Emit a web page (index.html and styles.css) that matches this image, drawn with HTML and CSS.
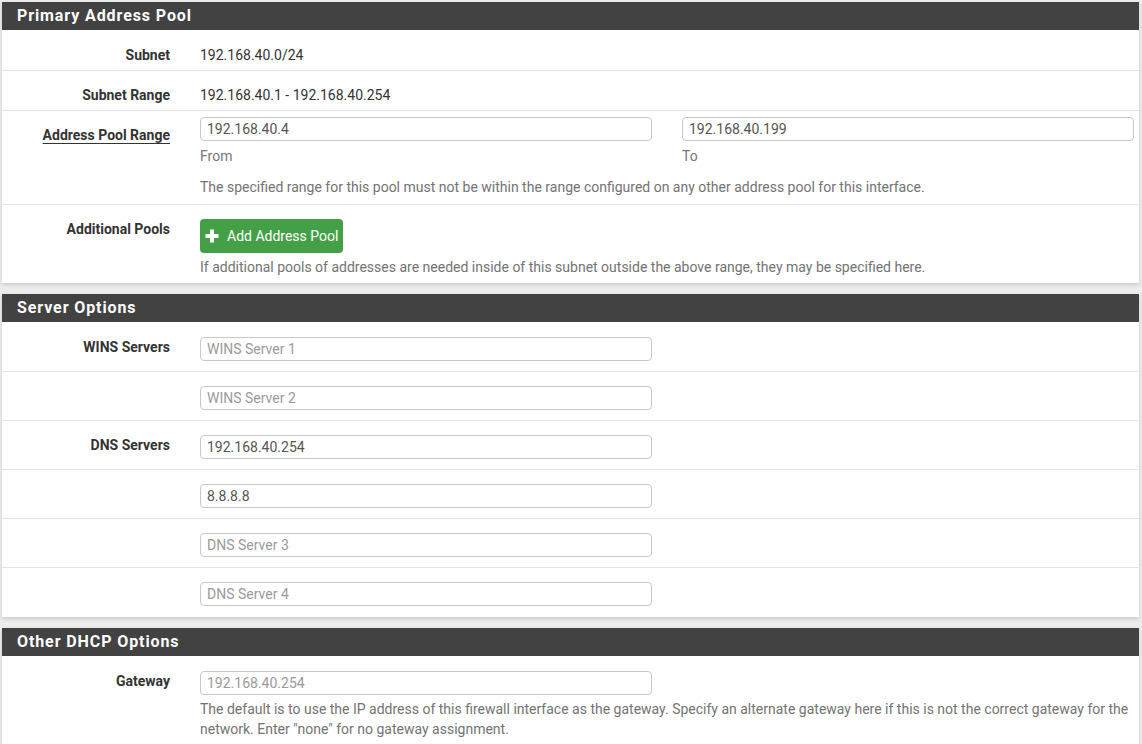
FILE: index.html
```html
<!DOCTYPE html>
<html>
<head>
<meta charset="utf-8">
<link rel="stylesheet" href="styles.css">
</head>
<body>
<div class="page">

  <section class="panel">
    <h2 class="panel-heading">Primary Address Pool</h2>
    <div class="row row-static">
      <div class="label">Subnet</div>
      <div class="field"><div class="static">192.168.40.0/24</div></div>
    </div>
    <div class="row row-static">
      <div class="label">Subnet Range</div>
      <div class="field"><div class="static">192.168.40.1 - 192.168.40.254</div></div>
    </div>
    <div class="row row-range">
      <div class="label"><span class="u">Address Pool Range</span></div>
      <div class="field">
        <div class="pair">
          <div>
            <input class="input" type="text" value="192.168.40.4">
            <div class="sub">From</div>
          </div>
          <div>
            <input class="input" type="text" value="192.168.40.199">
            <div class="sub">To</div>
          </div>
        </div>
        <div class="help help-gap">The specified range for this pool must not be within the range configured on any other address pool for this interface.</div>
      </div>
    </div>
    <div class="row row-button last">
      <div class="label">Additional Pools</div>
      <div class="field">
        <button class="btn-success" type="button">
          <svg class="plus" width="16" height="16" viewBox="0 0 16 16"><path d="M6 1.5h4v4.5h4.5v4h-4.5v4.5h-4v-4.5h-4.5v-4h4.5z" fill="#fff"/></svg>
          <span>Add Address Pool</span>
        </button>
        <div class="help">If additional pools of addresses are needed inside of this subnet outside the above range, they may be specified here.</div>
      </div>
    </div>
  </section>

  <section class="panel">
    <h2 class="panel-heading">Server Options</h2>
    <div class="row row-input">
      <div class="label">WINS Servers</div>
      <div class="field"><div class="half"><input class="input" type="text" placeholder="WINS Server 1"></div></div>
    </div>
    <div class="row row-input">
      <div class="label"></div>
      <div class="field"><div class="half"><input class="input" type="text" placeholder="WINS Server 2"></div></div>
    </div>
    <div class="row row-input">
      <div class="label">DNS Servers</div>
      <div class="field"><div class="half"><input class="input" type="text" value="192.168.40.254"></div></div>
    </div>
    <div class="row row-input">
      <div class="label"></div>
      <div class="field"><div class="half"><input class="input" type="text" value="8.8.8.8"></div></div>
    </div>
    <div class="row row-input">
      <div class="label"></div>
      <div class="field"><div class="half"><input class="input" type="text" placeholder="DNS Server 3"></div></div>
    </div>
    <div class="row row-input last">
      <div class="label"></div>
      <div class="field"><div class="half"><input class="input" type="text" placeholder="DNS Server 4"></div></div>
    </div>
  </section>

  <section class="panel">
    <h2 class="panel-heading">Other DHCP Options</h2>
    <div class="row row-input row-gw">
      <div class="label">Gateway</div>
      <div class="field">
        <div class="half"><input class="input" type="text" placeholder="192.168.40.254"></div>
        <div class="help help-tight">The default is to use the IP address of this firewall interface as the gateway. Specify an alternate gateway here if this is not the correct gateway for the network. Enter "none" for no gateway assignment.</div>
      </div>
    </div>
  </section>

</div>
</body>
</html>
```

FILE: styles.css
```css
* { box-sizing: border-box; }

html, body {
  margin: 0;
  padding: 0;
  background: #ececec;
  font-family: Roboto, "Liberation Sans", Arial, sans-serif;
  font-size: 14px;
  color: #333;
}

.page {
  padding: 2px 3px 0 2px;
}

.panel {
  background: #fff;
  box-shadow: 0 2px 4px rgba(0, 0, 0, 0.14);
  margin-bottom: 11px;
}

.panel-heading {
  margin: 0 0 1px;
  height: 28px;
  background: #424242;
  color: #fff;
  font-size: 16px;
  font-weight: 700;
  letter-spacing: 0.9px;
  line-height: 28px;
  padding-left: 15px;
}

.row {
  display: flex;
  border-bottom: 1px solid #e4e4e4;
  line-height: 20px;
}
.row.last { border-bottom: none; }

.label {
  width: 168px;
  flex: none;
  text-align: right;
  font-weight: 700;
  color: #333;
  padding-top: 14px;
}
.label .u {
  text-decoration: underline;
  text-underline-offset: 3px;
  text-decoration-thickness: 1px;
}

.field {
  flex: 1;
  margin-left: 30px;
  margin-right: 5px;
}

.row-static { height: 40px; }
.row-static .static { padding-top: 14px; color: #333; }

.row-range { height: 94px; }
.row-range .field { padding-top: 6px; }

.pair {
  display: grid;
  grid-template-columns: 1fr 1fr;
  column-gap: 30px;
}

.input {
  display: block;
  width: 100%;
  height: 24px;
  border: 1px solid #c8c8c8;
  border-radius: 4px;
  padding: 0 6px;
  font-family: Roboto, "Liberation Sans", Arial, sans-serif;
  font-size: 14px;
  color: #555;
  background: #fff;
  outline: none;
}
.input::placeholder { color: #9a9a9a; }

.sub {
  margin-top: 5px;
  color: #777;
}

.help {
  color: #737373;
  line-height: 20px;
}
.help-gap { margin-top: 11px; }
.help-tight { margin-top: 4px; }

.row-button { height: 78px; }
.row-button .field { padding-top: 14px; }
.row-button .help { margin-top: 4px; }

.btn-success {
  display: flex;
  align-items: center;
  gap: 7px;
  height: 34px;
  padding: 0 5px 0 4px;
  background: #43a047;
  border: none;
  border-radius: 4px;
  color: #fff;
  font-family: Roboto, "Liberation Sans", Arial, sans-serif;
  font-size: 14px;
  cursor: pointer;
}
.btn-success .plus { flex: none; }

.row-input { height: 49px; }
.row-input .field { padding-top: 14px; }

.half { width: calc(50% - 15px); }

.row-gw { height: auto; padding-bottom: 8px; }
```
